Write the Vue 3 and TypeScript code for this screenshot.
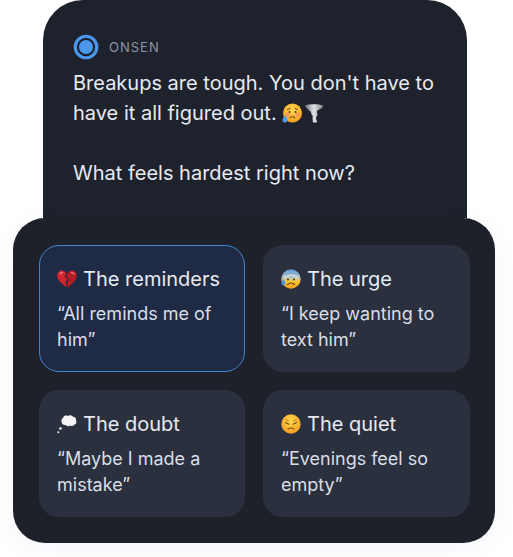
<script setup lang="ts">
interface Option {
  emoji: string;
  title: string;
  quote: string;
  selected?: boolean;
}

const options: Option[] = [
  { emoji: 'broken', title: 'The reminders', quote: '“All reminds me of him”', selected: true },
  { emoji: 'cold', title: 'The urge', quote: '“I keep wanting to text him”' },
  { emoji: 'thought', title: 'The doubt', quote: '“Maybe I made a mistake”' },
  { emoji: 'sad', title: 'The quiet', quote: '“Evenings feel so empty”' },
];
</script>

<template>
  <div class="page">
    <div class="bubble">
      <div class="brand">
        <svg class="logo" viewBox="0 0 26 26" aria-hidden="true">
          <circle cx="13" cy="13" r="10.75" fill="none" stroke="#4a97ee" stroke-width="3.2" />
          <circle cx="13" cy="13" r="7" fill="#4a97ee" />
        </svg>
        <span>ONSEN</span>
      </div>
      <p class="message">
        Breakups are tough. You don't have to have it all figured out.
        <svg class="emoji inline" viewBox="0 0 20 20" aria-hidden="true">
          <defs>
            <radialGradient id="faceA" cx="50%" cy="35%" r="70%">
              <stop offset="0" stop-color="#ffd84f" />
              <stop offset="1" stop-color="#f59a1c" />
            </radialGradient>
          </defs>
          <circle cx="10.5" cy="10" r="9.5" fill="url(#faceA)" />
          <circle cx="5.5" cy="11.5" r="2.2" fill="#f2806a" opacity=".55" />
          <circle cx="15.5" cy="11.5" r="2.2" fill="#f2806a" opacity=".55" />
          <circle cx="7.5" cy="9" r="1" fill="#5b3a12" />
          <circle cx="13.5" cy="9" r="1" fill="#5b3a12" />
          <path d="M5.5 6.5 8 5.5M15.5 6.5 13 5.5M8 14.5q2.500-2 5 0" stroke="#5b3a12" stroke-width="1" fill="none" stroke-linecap="round" />
          <path d="M3 12.500c1.500 2 2.500 3.200 2.500 4.500a2.500 2.500 0 0 1-5 0c0-1.300 1-2.500 2.500-4.500z" fill="#4a9de8" />
        </svg><svg class="emoji tornado" viewBox="0 0 20 20" aria-hidden="true">
          <defs>
            <linearGradient id="twist" x1="0" x2="1" y1="0" y2="0">
              <stop offset="0" stop-color="#6f7479" />
              <stop offset=".5" stop-color="#e2e5e8" />
              <stop offset="1" stop-color="#7c8186" />
            </linearGradient>
          </defs>
          <path d="M1 2.500C5 .8 15 .8 19 2.500c.3 2-2.500 3.500-5 4.500-1.500 1.500-1.500 2.500-.5 3.500.5 2-1.500 3-1.500 4.500s1.300 2.500 1 4.500H9c-.5-1.500 0-2.500-.5-3.500 0-2 1-3-1-4.500-.5-1 0-2-1-3C4 6 1.500 4.500 1 2.500z" fill="url(#twist)" />
        </svg>
        <br /><br />
        What feels hardest right now?
      </p>
    </div>

    <div class="sheet">
      <div class="option" :class="{ selected: option.selected }" v-for="option in options" :key="option.title">
        <div class="title">
          <svg v-if="option.emoji === 'broken'" class="emoji" viewBox="0 0 20 20" aria-hidden="true">
            <path d="M9.200 4.200 7.800 7.800l3 2.500-2.300 3 1.500 5.200C5 14.800.2 11.500.2 6.500.2 3.500 2.500 1.500 5 1.500c1.800 0 3.200 1.100 4.200 2.700z" fill="#d3232c" />
            <path d="M10.800 3.600C11.800 2.300 13.200 1.500 15 1.500c2.500 0 4.800 2 4.800 5 0 5-5.500 8.500-8.800 12.500l-1-5.200 2.500-3.300-3-2.500z" fill="#b81b24" />
            <path d="M3 5c.5-1 1.500-1.500 2.500-1.400M14.500 3.600c1-.1 2 .4 2.500 1.400" stroke="#f5898c" stroke-width="1.200" fill="none" stroke-linecap="round" />
          </svg>
          <svg v-else-if="option.emoji === 'cold'" class="emoji" viewBox="0 0 20 20" aria-hidden="true">
            <defs>
              <linearGradient id="coldFace" x1="0" x2="0" y1="0" y2="1">
                <stop offset="0" stop-color="#5b9be0" />
                <stop offset=".45" stop-color="#b9c6b8" />
                <stop offset=".6" stop-color="#fcc63f" />
                <stop offset="1" stop-color="#f59a1c" />
              </linearGradient>
            </defs>
            <circle cx="10" cy="10" r="9.700" fill="url(#coldFace)" />
            <path d="M3 8.500q7-4.500 14 0" stroke="#dfe6ee" stroke-width="1.600" fill="none" opacity=".8" />
            <circle cx="7" cy="10.500" r="1" fill="#5b3a12" />
            <circle cx="13" cy="10.500" r="1" fill="#5b3a12" />
            <path d="M6.500 15.500q3.500-3 7 0" stroke="#5b3a12" stroke-width="1.100" fill="none" stroke-linecap="round" />
            <path d="M2.500 10c1.300 2 2 3 2 4.200a2 2 0 0 1-4 0C.5 13 1.200 12 2.500 10z" fill="#4a9de8" />
          </svg>
          <svg v-else-if="option.emoji === 'thought'" class="emoji" viewBox="0 0 20 20" aria-hidden="true">
            <path d="M6 3.500C7 1.500 9.500 1 11 2c1.500-1.200 4-.8 5 .8 2 0 3.500 1.700 3 3.700 1 1.500.3 3.500-1.500 4-.8 1.500-3 2-4.500 1-1.500 1-3.500.8-4.500-.5-2 .3-3.800-1-3.800-3-1-1.800.5-4.300 2.800-4.500z" fill="#f4f5f7" />
            <circle cx="3.500" cy="14.500" r="1.300" fill="#f4f5f7" />
            <circle cx="1.300" cy="18.300" r="1" fill="#f4f5f7" />
          </svg>
          <svg v-else class="emoji" viewBox="0 0 20 20" aria-hidden="true">
            <defs>
              <radialGradient id="sadFace" cx="50%" cy="35%" r="70%">
                <stop offset="0" stop-color="#ffd84f" />
                <stop offset="1" stop-color="#f59a1c" />
              </radialGradient>
            </defs>
            <circle cx="10" cy="10" r="9.700" fill="url(#sadFace)" />
            <path d="M4.500 8.500 8 10.300M15.500 8.500 12 10.300M7 15q3-2 6 0" stroke="#7a4a12" stroke-width="1.100" fill="none" stroke-linecap="round" />
            <path d="M5 5.800 7.500 7M15 5.800 12.500 7" stroke="#b87a1a" stroke-width=".9" fill="none" stroke-linecap="round" />
          </svg>
          <span>{{ option.title }}</span>
        </div>
        <p class="quote">{{ option.quote }}</p>
      </div>
    </div>
  </div>
</template>

<style>
html,
body {
  background: #fff;
}
</style>

<style scoped>
.page {
  width: 513px;
  height: 557px;
  display: flex;
  flex-direction: column;
  align-items: flex-start;
  font-family: Inter, "Liberation Sans", sans-serif;
  overflow: hidden;
}

.bubble {
  box-sizing: border-box;
  width: 424px;
  height: 218px;
  margin-left: 43px;
  padding: 34px 30px 0;
  background: #1e222c;
  border-radius: 40px 40px 0 0;
}

.brand {
  display: flex;
  align-items: center;
  gap: 10px;
  color: #8d95a3;
  font-size: 13px;
  letter-spacing: 1px;
}

.logo {
  width: 26px;
  height: 26px;
}

.message {
  margin: 8px 0 0;
  color: #e6eaf1;
  font-size: 20px;
  line-height: 30px;
}

.sheet {
  box-sizing: border-box;
  width: 482px;
  height: 325px;
  margin-left: 13px;
  padding: 27px 26px;
  display: grid;
  grid-template-columns: 206px 207px;
  grid-auto-rows: 127px;
  gap: 18px;
  background: #1e212a;
  border-radius: 32px;
  box-shadow: 0 6px 24px rgba(90, 110, 190, 0.06);
}

.option {
  box-sizing: border-box;
  padding: 20px 18px;
  background: #2a303d;
  border-radius: 20px;
  color: #e6eaf1;
}

.option.selected {
  padding: 19px 17px;
  background: #1f2b45;
  border: 1px solid #4285cf;
}

.title {
  display: flex;
  align-items: center;
  gap: 6px;
  font-size: 20px;
  line-height: 28px;
}

.quote {
  margin: 8px 0 0;
  font-size: 18px;
  line-height: 26px;
  color: #d9dee7;
}

.emoji {
  width: 20px;
  height: 20px;
  flex: none;
}

.inline {
  vertical-align: -3px;
}

.tornado {
  margin-left: 2px;
  vertical-align: -3px;
}
</style>
